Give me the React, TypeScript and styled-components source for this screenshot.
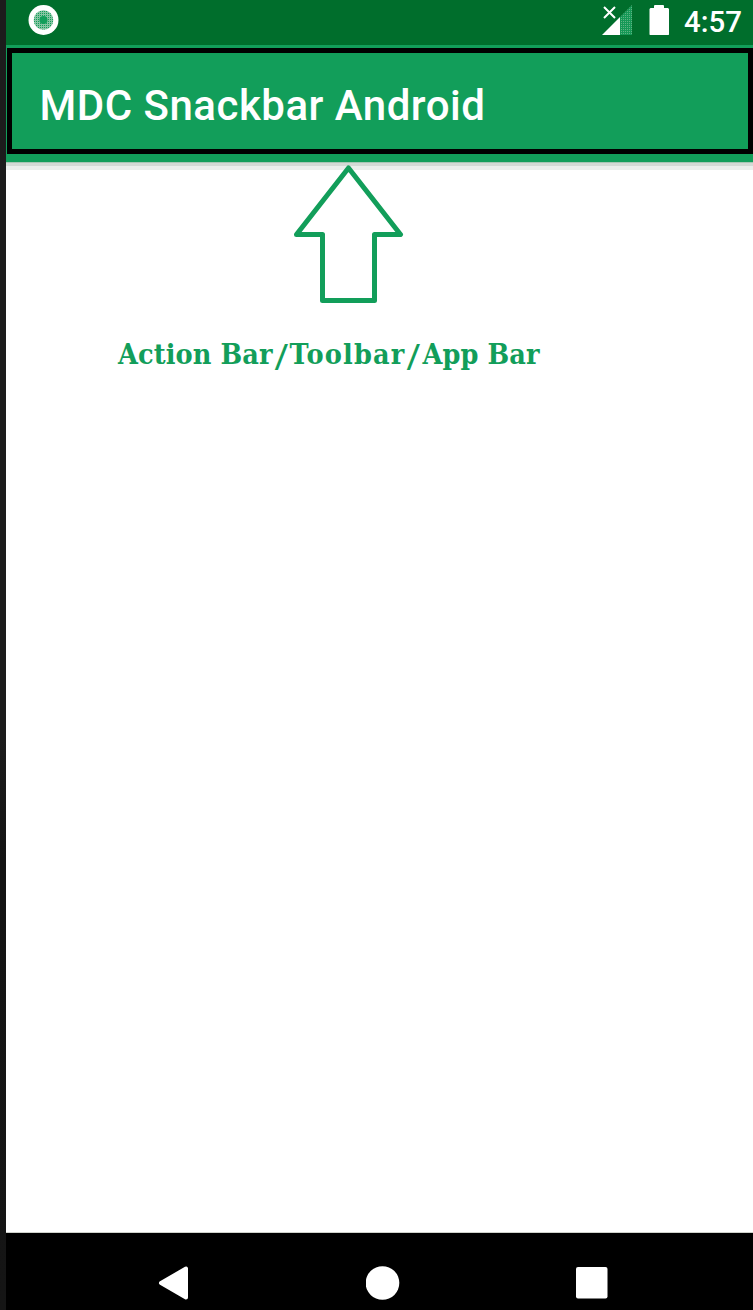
import React from 'react';
import styled, { createGlobalStyle } from 'styled-components';

const green = '#129e5a';
const darkGreen = '#006e2c';

const GlobalStyle = createGlobalStyle`
  body { margin: 0; background: #fff; }
  * { box-sizing: border-box; }
  svg { display: block; flex: none; }
`;

const Device = styled.div`
  display: flex;
  width: 753px;
  height: 1310px;
  overflow: hidden;
`;

const Bezel = styled.div`
  flex: 0 0 6px;
  background: linear-gradient(#1c1c1c 0 738px, #141414 860px, #151515 100%);
`;

const Screen = styled.div`
  flex: 1;
  display: flex;
  flex-direction: column;
  overflow: hidden;
  background: #fff;
`;

const StatusBar = styled.header`
  height: 45px;
  flex: none;
  display: flex;
  align-items: flex-start;
  background: ${darkGreen};
`;

const Notification = styled.div`
  margin: 5px auto 0 22px;
`;

const Signal = styled.div`
  margin: 5px 17px 0 0;
`;

const Battery = styled.div`
  margin: 5px 15px 0 0;
`;

const Clock = styled.time`
  width: 69px;
  padding-top: 4px;
  color: #fff;
  font: 500 29.4px/36px Roboto, sans-serif;
  white-space: nowrap;
`;

const AppBar = styled.div`
  flex: none;
  height: 117px;
  padding: 3px 0 8px 1px;
  background: ${green};
  box-shadow: 0 1px 0 #a9c6b5, 0 4px 0 #d3dad5, 0 8px 0 #ebefec;
`;

const Frame = styled.div`
  height: 106px;
  display: flex;
  align-items: center;
  padding-left: 27.5px;
  border: 5px solid #000;
`;

const Title = styled.h1`
  margin: 9px 0 0;
  color: #fff;
  font: 500 42px/48px Roboto, sans-serif;
  letter-spacing: 0.5px;
  white-space: nowrap;
`;

const Content = styled.main`
  flex: 1;
  display: flex;
  flex-direction: column;
  align-items: flex-start;
  border-bottom: 1px solid #cfd2cc;
`;

const Pointer = styled.svg`
  position: relative;
  margin: 2px 0 0 286px;
`;

const Caption = styled.p`
  margin: 30px 0 0 112px;
  color: ${green};
  font: 700 28.5px/40px "DejaVu Serif Condensed", "DejaVu Serif", serif;
  font-stretch: semi-condensed;
  letter-spacing: 0.1px;
  white-space: nowrap;
`;

const Slash = styled.span`
  display: inline-block;
  width: 17px;
  text-align: center;
  font-size: 31px;
  font-weight: 400;
  line-height: 1;
  transform: translateY(3px) scaleX(1.4);
`;

const WideWord = styled.span`
  letter-spacing: 1.15px;
`;

const NavBar = styled.nav`
  flex: none;
  height: 77px;
  display: flex;
  align-items: flex-start;
  padding: 32px 0 0 152px;
  background: #000;
`;

const HomeIcon = styled.svg`
  margin-left: 177px;
`;

const RecentsIcon = styled.svg`
  margin-left: 175px;
`;

export default function App() {
  return (
    <Device>
      <GlobalStyle />
      <Bezel />
      <Screen>
        <StatusBar>
          <Notification>
            <svg width="31" height="31" viewBox="0 0 31 31">
              <defs>
                <pattern id="dots" width="2" height="2" patternUnits="userSpaceOnUse">
                  <rect width="2" height="2" fill="#86c5a3" />
                  <rect width="1" height="1" fill={green} />
                </pattern>
              </defs>
              <circle cx="15.5" cy="15" r="15" fill="#fff" />
              <circle cx="15.5" cy="15" r="9.8" fill="url(#dots)" />
              <circle cx="15.5" cy="15" r="4" fill={green} />
            </svg>
          </Notification>
          <Signal>
            <svg width="31" height="31" viewBox="0 0 31 31">
              <defs>
                <pattern id="mesh" width="2" height="2" patternUnits="userSpaceOnUse">
                  <rect width="2" height="2" fill="#159856" />
                  <rect width="1" height="1" fill="#60b383" />
                </pattern>
              </defs>
              <path d="M1 30L19 12V30Z" fill="#fff" />
              <path d="M19 12L31 0V30H19Z" fill="url(#mesh)" />
              <path d="M3 2L14 13M14 2L3 13" stroke="#fff" strokeWidth="2" />
            </svg>
          </Signal>
          <Battery>
            <svg width="20" height="31" viewBox="0 0 20 31">
              <path d="M5 0.5L6 0H14L15 0.5V3H19L20 4V29.5L19.5 30H1L0.5 29.5V4L1.5 3H5Z" fill="#fff" />
            </svg>
          </Battery>
          <Clock>4:57</Clock>
        </StatusBar>
        <AppBar>
          <Frame>
            <Title>MDC Snackbar Android</Title>
          </Frame>
        </AppBar>
        <Content>
          <Pointer width="114" height="140" viewBox="0 0 114 140">
            <path
              d="M56.5 4L108.5 70.5H82.5V136.5H30.5V70.5H4.5Z"
              fill="#fff"
              stroke={green}
              strokeWidth="5"
              strokeLinejoin="round"
            />
          </Pointer>
          <Caption>
            Action Bar<Slash>/</Slash><WideWord>Toolbar</WideWord><Slash>/</Slash>App Bar
          </Caption>
        </Content>
        <NavBar>
          <svg width="31" height="36" viewBox="0 0 31 36">
            <path d="M3 18L28 3.5V32.5Z" fill="#fff" stroke="#fff" strokeWidth="4" strokeLinejoin="round" />
          </svg>
          <HomeIcon width="34" height="36" viewBox="0 0 34 36">
            <circle cx="16.5" cy="18" r="16.8" fill="#fff" />
          </HomeIcon>
          <RecentsIcon width="34" height="36" viewBox="0 0 34 36">
            <rect x="1" y="2" width="31.5" height="31.5" rx="2" fill="#fff" />
          </RecentsIcon>
        </NavBar>
      </Screen>
    </Device>
  );
}
